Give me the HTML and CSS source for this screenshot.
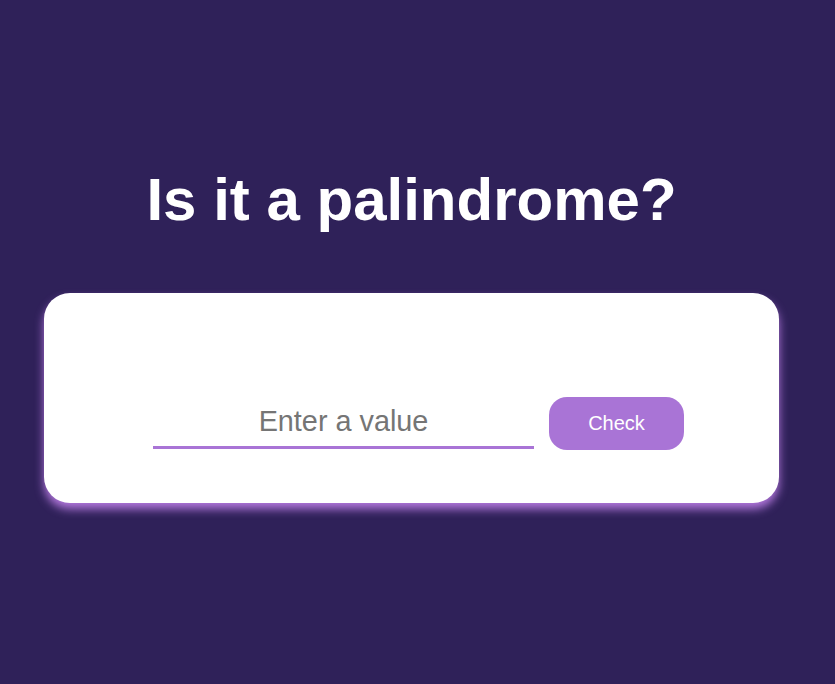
FILE: index.html
```html
<!DOCTYPE html>
<html lang="en">
<head>
<meta charset="utf-8">
<title>Palindrome Checker</title>
<link rel="stylesheet" href="styles.css">
</head>
<body>
  <main class="page">
    <h1 class="title">Is it a palindrome?</h1>
    <section class="card">
      <form class="checker">
        <input class="value-input" type="text" placeholder="Enter a value">
        <button class="check-btn" type="button">Check</button>
      </form>
    </section>
  </main>
</body>
</html>
```

FILE: styles.css
```css
html, body {
  margin: 0;
  padding: 0;
}

body {
  background: #2f2159;
  font-family: "Liberation Sans", Arial, sans-serif;
  width: 835px;
  height: 684px;
  overflow: hidden;
}

.page {
  display: flex;
  flex-direction: column;
  padding: 165px 0 0 44px;
}

.title {
  margin: 0;
  width: 735px;
  text-align: center;
  color: #ffffff;
  font-size: 60px;
  font-weight: bold;
  line-height: 69px;
}

.card {
  margin-top: 59px;
  width: 735px;
  height: 210px;
  box-sizing: border-box;
  background: #ffffff;
  border-radius: 26px;
  box-shadow: 0 6px 10px #b277dc;
  display: flex;
  align-items: flex-end;
  padding: 0 0 53px 109px;
}

.checker {
  display: flex;
  align-items: flex-end;
  gap: 15px;
  margin: 0;
}

.value-input {
  width: 381px;
  box-sizing: border-box;
  border: none;
  border-bottom: 3px solid #a974d6;
  outline: none;
  background: transparent;
  font-family: "Liberation Sans", Arial, sans-serif;
  font-size: 28.8px;
  line-height: normal;
  padding: 4px 0 8px;
  margin: 0 0 1px 0;
  text-align: center;
  color: #333;
}

.value-input::placeholder {
  color: #757575;
  opacity: 1;
}

.check-btn {
  width: 135px;
  height: 53px;
  border: none;
  border-radius: 18px;
  background: #a974d6;
  color: #ffffff;
  font-family: "Liberation Sans", Arial, sans-serif;
  font-size: 20px;
  padding: 0;
  cursor: pointer;
}
```
